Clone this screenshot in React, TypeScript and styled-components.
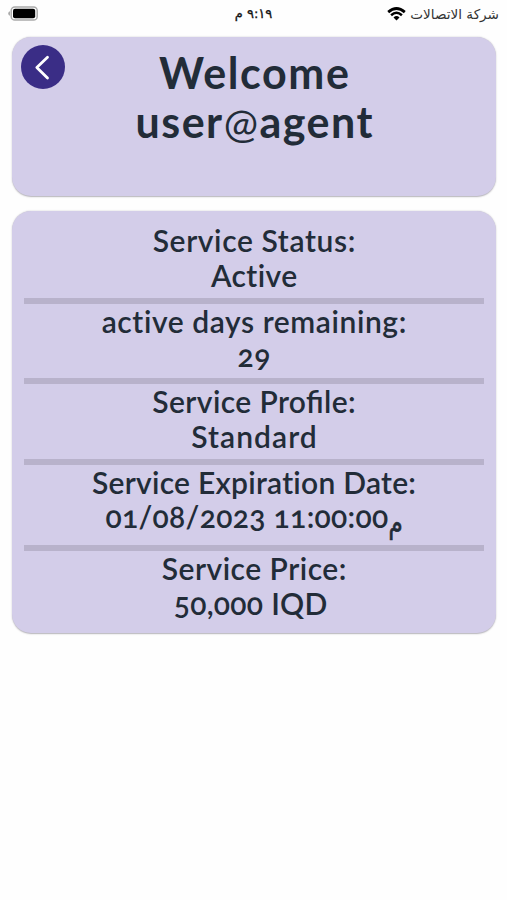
import React from "react";
import styled, { createGlobalStyle } from "styled-components";

const GlobalStyle = createGlobalStyle`
  * { box-sizing: border-box; }
  body { margin: 0; background: #fefefe; }
`;

const Screen = styled.div`
  width: 507px;
  height: 900px;
  overflow: hidden;
  color: #222c38;
  font-family: "Lato", sans-serif;
`;

const StatusBar = styled.header`
  display: grid;
  grid-template-columns: 1fr auto 1fr;
  align-items: center;
  height: 36px;
  padding: 0 8px 9px;
  color: #111;
  font: 400 14px/20px "DejaVu Sans", sans-serif;
`;

const Clock = styled.time`
  font-size: 13px;
  -webkit-text-stroke: 0.3px #111;
`;

const Carrier = styled.div`
  display: flex;
  justify-content: flex-end;
  align-items: center;
  gap: 4px;
  white-space: nowrap;
`;

const CarrierName = styled.span`
  font-size: 13.6px;
  color: #333;
`;

const Card = styled.section`
  margin: 0 11px 0 12px;
  border-radius: 19px;
  background: #d3cde9;
  box-shadow: 0 0.5px 1.5px rgba(70, 65, 80, 0.4);
`;

const HeaderCard = styled(Card)`
  display: grid;
  grid-template-columns: 44px 1fr 44px;
  align-items: start;
  height: 159px;
  margin-top: 1px;
  padding: 8px 9px 0;
`;

const BackButton = styled.button`
  display: grid;
  place-items: center;
  width: 44px;
  height: 44px;
  padding: 0;
  border: 0;
  border-radius: 50%;
  background: #3a2d86;
`;

const Title = styled.h1`
  margin: 3px 0 0;
  text-align: center;
  font-size: 43px;
  font-weight: 700;
  line-height: 49px;
`;

const TextLine = styled.span<{ $spacing?: number }>`
  display: block;
  white-space: nowrap;
  letter-spacing: ${p => p.$spacing ?? 0}px;
  margin-right: ${p => -(p.$spacing ?? 0)}px;
`;

const AtSign = styled.span`
  font-weight: 400;
  font-size: 41px;
`;

const DetailsCard = styled(Card)`
  height: 422px;
  margin-top: 15px;
  padding: 12px 12px 0;
`;

const Detail = styled.div<{ $height?: number; $ligatures?: boolean }>`
  height: ${p => p.$height ?? 80.5}px;
  border-bottom: 6px solid #b8b2cb;
  text-align: center;
  font-size: 30px;
  font-weight: 600;
  line-height: 34.5px;
  font-variant-numeric: oldstyle-nums;
  font-feature-settings: "liga" ${p => (p.$ligatures ? 1 : 0)};

  &:last-child { border-bottom: 0; }
`;

const Value = styled(TextLine)<{ $trailing?: number }>`
  padding-right: ${p => p.$trailing ?? 0}px;
`;

const Meridiem = styled.span`
  display: inline-block;
  font-family: "DejaVu Sans", sans-serif;
  font-size: 23px;
  font-weight: 400;
  line-height: 0;
  vertical-align: -3px;
  transform: scaleY(1.3);
  -webkit-text-stroke: 0.5px #222c38;
`;

const details = [
  { label: "Service Status:", ls: 0.62, value: "Active", vs: 0.4 },
  { label: "active days remaining:", ls: 0.58, value: "29", vs: 0.6 },
  { label: "Service Profile:", ls: 0.4, value: "Standard", vs: 1.05, ligatures: true },
  { label: "Service Expiration Date:", ls: 0.25, value: "01/08/2023 11:00:00", vs: 0.32, meridiem: "م", height: 86.5 },
  { label: "Service Price:", ls: 0.5, value: "50,000 IQD", vs: 0.3, trailing: 7 },
];

const Battery = () => (
  <svg width="31" height="15" viewBox="0 0 31 15" aria-hidden="true">
    <path d="M2 5.2Q.2 5.6.2 7.5T2 9.8Z" fill="#aaa" />
    <rect x="3.2" y="1" width="26" height="13" rx="3.6" fill="#fff" stroke="#aaa" strokeWidth="1.5" />
    <rect x="5" y="2.8" width="22.2" height="9.4" rx="2" fill="#000" />
  </svg>
);

const Wifi = () => (
  <svg width="19" height="14" viewBox="0 0 19 14" fill="none" stroke="#000" aria-hidden="true">
    <path d="M1.2 5.1Q9.5-2 17.8 5.1" strokeWidth="2.8" />
    <path d="M4.1 8.2Q9.5 3.4 14.9 8.2" strokeWidth="2.5" />
    <path d="M6.5 10.4Q9.5 7.8 12.5 10.4L9.5 13.4Z" fill="#000" stroke="none" />
  </svg>
);

export default function App() {
  return (
    <Screen>
      <GlobalStyle />
      <StatusBar>
        <Battery />
        <Clock dir="rtl">٩:١٩ م</Clock>
        <Carrier>
          <Wifi />
          <CarrierName dir="rtl">شركة الاتصالات</CarrierName>
        </Carrier>
      </StatusBar>
      <HeaderCard>
        <BackButton aria-label="Back">
          <svg width="44" height="44" viewBox="0 0 44 44" fill="none" stroke="#fff" strokeWidth="2.8" strokeLinecap="round" strokeLinejoin="round">
            <path d="M26.5 12.2L15.8 22.4L26.5 33" />
          </svg>
        </BackButton>
        <Title>
          <TextLine $spacing={1.6}>Welcome</TextLine>
          <TextLine $spacing={1.5}>user<AtSign>@</AtSign>agent</TextLine>
        </Title>
      </HeaderCard>
      <DetailsCard>
        {details.map(d => (
          <Detail key={d.label} $height={d.height} $ligatures={d.ligatures}>
            <TextLine $spacing={d.ls}>{d.label}</TextLine>
            <Value $spacing={d.vs} $trailing={d.trailing}>
              {d.value}
              {d.meridiem && <Meridiem>{d.meridiem}</Meridiem>}
            </Value>
          </Detail>
        ))}
      </DetailsCard>
    </Screen>
  );
}
